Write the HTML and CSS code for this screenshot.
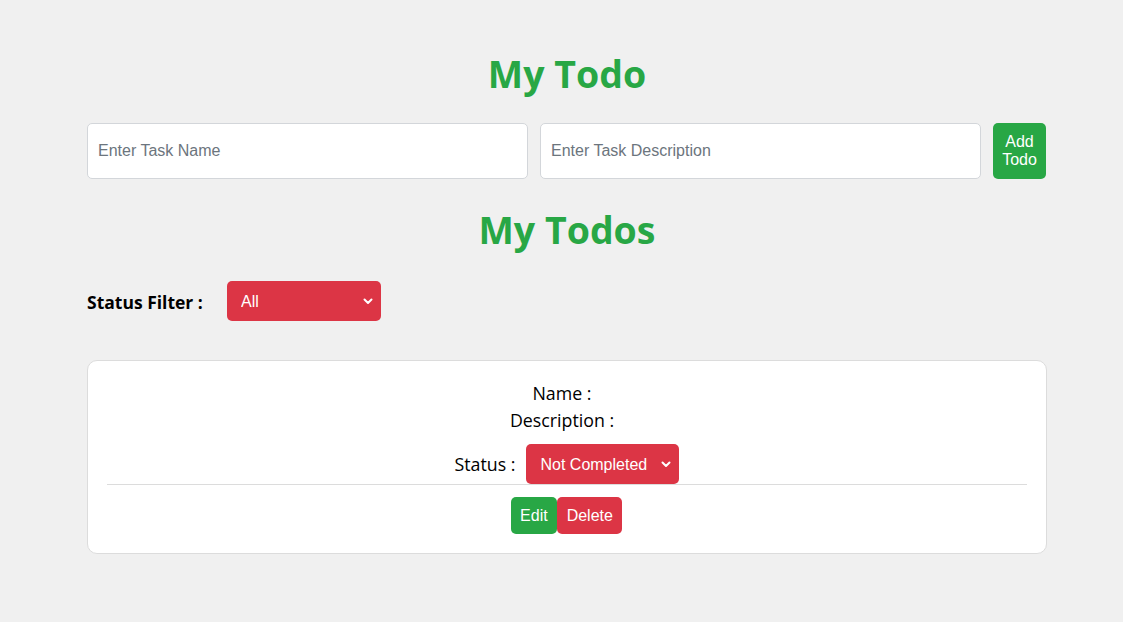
FILE: index.html
```html
<!DOCTYPE html>
<html lang="en">
<head>
<meta charset="utf-8">
<title>My Todo</title>
<link rel="stylesheet" href="styles.css">
</head>
<body>
<div class="app">
  <h1 class="title">My Todo</h1>
  <div class="add-row">
    <input class="field" type="text" placeholder="Enter Task Name">
    <input class="field" type="text" placeholder="Enter Task Description">
    <button class="btn btn-green add-btn">Add Todo</button>
  </div>
  <h2 class="title title-sub">My Todos</h2>
  <div class="filter-row">
    <span class="filter-label">Status Filter :</span>
    <span class="select-wrap select-filter">
      <select class="red-select"><option>All</option><option>Completed</option><option>Not Completed</option></select>
      <svg class="chev" width="10" height="7" viewBox="0 0 10 7"><path d="M1.5 1.5 L5 5 L8.5 1.5" fill="none" stroke="#fff" stroke-width="2" stroke-linecap="round" stroke-linejoin="round"/></svg>
    </span>
  </div>
  <div class="card">
    <div class="line">Name :</div>
    <div class="line">Description :</div>
    <div class="status-row">
      <span class="status-label">Status :</span>
      <span class="select-wrap select-status">
        <select class="red-select"><option>Not Completed</option><option>Completed</option></select>
        <svg class="chev" width="10" height="7" viewBox="0 0 10 7"><path d="M1.5 1.5 L5 5 L8.5 1.5" fill="none" stroke="#fff" stroke-width="2" stroke-linecap="round" stroke-linejoin="round"/></svg>
      </span>
    </div>
    <div class="divider"></div>
    <div class="actions">
      <button class="btn btn-green small">Edit</button><button class="btn btn-red small">Delete</button>
    </div>
  </div>
</div>
</body>
</html>
```

FILE: styles.css
```css
html, body {
  margin: 0;
  padding: 0;
  background: #f0f0f0;
}
body {
  padding-left: 11px;
  font-family: "Open Sans", "Noto Sans", sans-serif;
  color: #000;
}
.app {
  width: 960px;
  margin: 0 auto;
  padding-top: 50px;
}
.title {
  margin: 0;
  text-align: center;
  color: #28a745;
  font-size: 37.5px;
  font-weight: 700;
  line-height: 47px;
}
.title-sub {
  margin-top: 27px;
}
.add-row {
  display: flex;
  gap: 12px;
  margin-top: 26px;
}
.field {
  flex: 0 0 441px;
  box-sizing: border-box;
  height: 56px;
  padding: 0 10px;
  border: 1px solid #d3d6da;
  border-radius: 5px;
  background: #fff;
  font-family: "Liberation Sans", Arial, sans-serif;
  font-size: 16px;
  color: #212529;
  outline: none;
}
.field::placeholder {
  color: #6c757d;
}
.btn {
  border: none;
  color: #fff;
  font-family: "Liberation Sans", Arial, sans-serif;
  font-size: 16px;
  cursor: pointer;
}
.btn-green { background: #28a745; }
.btn-red { background: #dc3545; }
.add-btn {
  width: 53px;
  height: 56px;
  padding: 0 4px;
  border-radius: 5px;
  line-height: 18px;
}
.filter-row {
  display: flex;
  align-items: center;
  margin-top: 28px;
}
.filter-label {
  font-weight: 700;
  font-size: 17.5px;
  width: 140px;
  padding-top: 2px;
}
.select-wrap {
  position: relative;
  display: inline-block;
}
.red-select {
  -webkit-appearance: none;
  appearance: none;
  display: block;
  box-sizing: border-box;
  height: 40px;
  padding: 0 28px 0 14px;
  border: none;
  border-radius: 5px;
  background: #dc3545;
  color: #fff;
  font-family: "Liberation Sans", Arial, sans-serif;
  font-size: 16px;
  outline: none;
}
.select-filter .red-select { width: 154px; }
.select-status .red-select { width: 153px; }
.chev {
  position: absolute;
  right: 8px;
  top: 17px;
  pointer-events: none;
}
.card {
  margin-top: 39px;
  background: #fff;
  border: 1px solid #dcdcdc;
  border-radius: 10px;
  padding: 19px 19px 19px;
  text-align: center;
}
.line {
  font-size: 17.8px;
  line-height: 27px;
  padding-right: 10px;
}
.status-row {
  display: flex;
  justify-content: center;
  align-items: center;
  gap: 11px;
  margin-top: 10px;
}
.status-label {
  font-size: 17.8px;
}
.divider {
  height: 1px;
  background: #dcdcdc;
}
.actions {
  display: flex;
  justify-content: center;
  margin-top: 12px;
  padding-right: 1px;
}
.small {
  height: 37px;
  padding: 0 9.5px;
  border-radius: 5px;
}
```
